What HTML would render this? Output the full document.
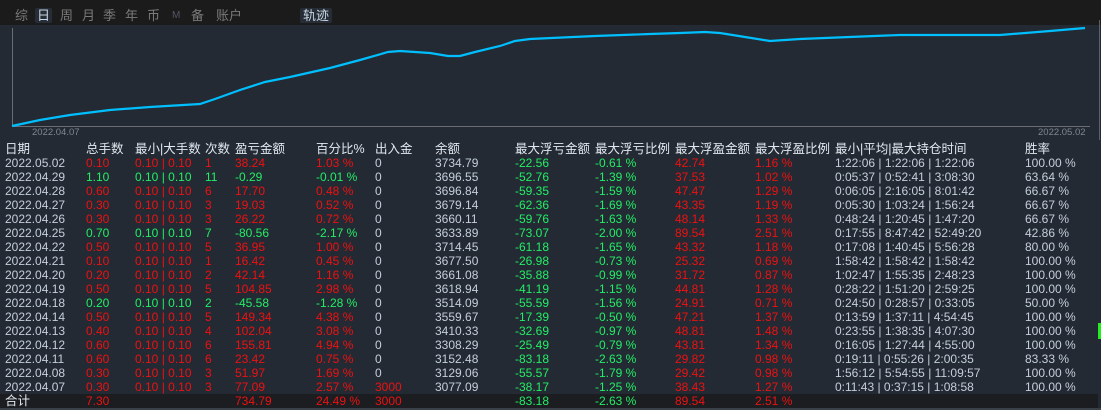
<!DOCTYPE html>
<html><head><meta charset="utf-8"><style>
body{margin:0;width:1101px;height:410px;background:#232a33;overflow:hidden;position:relative;font-family:"Liberation Sans","Noto Sans CJK SC",sans-serif;}
.top{position:absolute;left:0;top:0;width:1101px;height:25px;background:#1b1b1b;}
.t{position:absolute;top:8px;font-size:13px;line-height:15px;color:#7a7a7a;}
.sel{background:#262d36;color:#c8d6e6;border-radius:2px;padding:0 2px;}
.r{position:absolute;left:0;width:1095px;height:14px;font-size:12px;line-height:14px;color:#c5cfdc;}
.r span{position:absolute;white-space:pre;}
.h{font-size:12.5px;color:#e2e8f0;line-height:14px;}
.R{color:#ee1111}.G{color:#22ee66}
.a0{left:5px}.a1{left:86px}.a2{left:135px}.a3{left:205px}.a4{left:235px}.a5{left:316px}.a6{left:375px}.a7{left:435px}.a8{left:515px}.a9{left:595px}.a10{left:675px}.a11{left:755px}.a12{left:835px}.a13{left:1025px}
</style></head><body>
<div class="top"></div>
<span class="t" style="left:15px">综</span>
<span class="t sel" style="left:35px">日</span>
<span class="t" style="left:60px">周</span>
<span class="t" style="left:82px">月</span>
<span class="t" style="left:103px">季</span>
<span class="t" style="left:125px">年</span>
<span class="t" style="left:147px">币</span>
<span class="t" style="left:172px;font-size:10px;color:#556">M</span>
<span class="t" style="left:191px">备</span>
<span class="t" style="left:216px">账户</span>
<span class="t sel" style="left:300px;padding:0 3px">轨迹</span>
<svg style="position:absolute;left:0;top:0" width="1101" height="140">
<line x1="12.5" y1="28" x2="12.5" y2="127" stroke="#6a6e74" stroke-width="1"/>
<line x1="12" y1="126.5" x2="1090" y2="126.5" stroke="#6a6e74" stroke-width="1"/>
<polyline fill="none" stroke="#00bfff" stroke-width="2.2" points="12,126 40,120 70,115 110,110 150,107 200,104 215,99 240,90 265,82 290,77 330,68 360,60 388,52 400,51 430,53 448,56 460,56 475,52 500,46 515,41 530,39 595,36 650,34 680,33 705,32 720,33 745,37 770,41 800,39 900,35 1000,35 1050,31 1085,28"/>
<line x1="1099.5" y1="20" x2="1099.5" y2="410" stroke="#5a6068" stroke-width="1"/>
<text x="32" y="135" font-size="9.5" fill="#7f8792" font-family="Liberation Sans">2022.04.07</text>
<text x="1038" y="135" font-size="9.5" fill="#7f8792" font-family="Liberation Sans">2022.05.02</text>
</svg>
<div style="position:absolute;left:1098px;top:323px;width:3px;height:16px;background:#22ee22"></div>
<div class="r h" style="top:142px"><span class="a0">日期</span><span class="a1">总手数</span><span class="a2">最小|大手数</span><span class="a3">次数</span><span class="a4">盈亏金额</span><span class="a5">百分比%</span><span class="a6">出入金</span><span class="a7">余额</span><span class="a8">最大浮亏金额</span><span class="a9">最大浮亏比例</span><span class="a10">最大浮盈金额</span><span class="a11">最大浮盈比例</span><span class="a12">最小|平均|最大持仓时间</span><span class="a13">胜率</span></div>

<div class="r" style="top:156px"><span class="a0">2022.05.02</span><span class="a1 R">0.10</span><span class="a2 R">0.10 | 0.10</span><span class="a3 R">1</span><span class="a4 R">38.24</span><span class="a5 R">1.03 %</span><span class="a6">0</span><span class="a7">3734.79</span><span class="a8 G">-22.56</span><span class="a9 G">-0.61 %</span><span class="a10 R">42.74</span><span class="a11 R">1.16 %</span><span class="a12">1:22:06 | 1:22:06 | 1:22:06</span><span class="a13">100.00 %</span></div>
<div class="r" style="top:170px"><span class="a0">2022.04.29</span><span class="a1 G">1.10</span><span class="a2 G">0.10 | 0.10</span><span class="a3 G">11</span><span class="a4 G">-0.29</span><span class="a5 G">-0.01 %</span><span class="a6">0</span><span class="a7">3696.55</span><span class="a8 G">-52.76</span><span class="a9 G">-1.39 %</span><span class="a10 R">37.53</span><span class="a11 R">1.02 %</span><span class="a12">0:05:37 | 0:52:41 | 3:08:30</span><span class="a13">63.64 %</span></div>
<div class="r" style="top:184px"><span class="a0">2022.04.28</span><span class="a1 R">0.60</span><span class="a2 R">0.10 | 0.10</span><span class="a3 R">6</span><span class="a4 R">17.70</span><span class="a5 R">0.48 %</span><span class="a6">0</span><span class="a7">3696.84</span><span class="a8 G">-59.35</span><span class="a9 G">-1.59 %</span><span class="a10 R">47.47</span><span class="a11 R">1.29 %</span><span class="a12">0:06:05 | 2:16:05 | 8:01:42</span><span class="a13">66.67 %</span></div>
<div class="r" style="top:198px"><span class="a0">2022.04.27</span><span class="a1 R">0.30</span><span class="a2 R">0.10 | 0.10</span><span class="a3 R">3</span><span class="a4 R">19.03</span><span class="a5 R">0.52 %</span><span class="a6">0</span><span class="a7">3679.14</span><span class="a8 G">-62.36</span><span class="a9 G">-1.69 %</span><span class="a10 R">43.35</span><span class="a11 R">1.19 %</span><span class="a12">0:05:30 | 1:03:24 | 1:56:24</span><span class="a13">66.67 %</span></div>
<div class="r" style="top:212px"><span class="a0">2022.04.26</span><span class="a1 R">0.30</span><span class="a2 R">0.10 | 0.10</span><span class="a3 R">3</span><span class="a4 R">26.22</span><span class="a5 R">0.72 %</span><span class="a6">0</span><span class="a7">3660.11</span><span class="a8 G">-59.76</span><span class="a9 G">-1.63 %</span><span class="a10 R">48.14</span><span class="a11 R">1.33 %</span><span class="a12">0:48:24 | 1:20:45 | 1:47:20</span><span class="a13">66.67 %</span></div>
<div class="r" style="top:226px"><span class="a0">2022.04.25</span><span class="a1 G">0.70</span><span class="a2 G">0.10 | 0.10</span><span class="a3 G">7</span><span class="a4 G">-80.56</span><span class="a5 G">-2.17 %</span><span class="a6">0</span><span class="a7">3633.89</span><span class="a8 G">-73.07</span><span class="a9 G">-2.00 %</span><span class="a10 R">89.54</span><span class="a11 R">2.51 %</span><span class="a12">0:17:55 | 8:47:42 | 52:49:20</span><span class="a13">42.86 %</span></div>
<div class="r" style="top:240px"><span class="a0">2022.04.22</span><span class="a1 R">0.50</span><span class="a2 R">0.10 | 0.10</span><span class="a3 R">5</span><span class="a4 R">36.95</span><span class="a5 R">1.00 %</span><span class="a6">0</span><span class="a7">3714.45</span><span class="a8 G">-61.18</span><span class="a9 G">-1.65 %</span><span class="a10 R">43.32</span><span class="a11 R">1.18 %</span><span class="a12">0:17:08 | 1:40:45 | 5:56:28</span><span class="a13">80.00 %</span></div>
<div class="r" style="top:254px"><span class="a0">2022.04.21</span><span class="a1 R">0.10</span><span class="a2 R">0.10 | 0.10</span><span class="a3 R">1</span><span class="a4 R">16.42</span><span class="a5 R">0.45 %</span><span class="a6">0</span><span class="a7">3677.50</span><span class="a8 G">-26.98</span><span class="a9 G">-0.73 %</span><span class="a10 R">25.32</span><span class="a11 R">0.69 %</span><span class="a12">1:58:42 | 1:58:42 | 1:58:42</span><span class="a13">100.00 %</span></div>
<div class="r" style="top:268px"><span class="a0">2022.04.20</span><span class="a1 R">0.20</span><span class="a2 R">0.10 | 0.10</span><span class="a3 R">2</span><span class="a4 R">42.14</span><span class="a5 R">1.16 %</span><span class="a6">0</span><span class="a7">3661.08</span><span class="a8 G">-35.88</span><span class="a9 G">-0.99 %</span><span class="a10 R">31.72</span><span class="a11 R">0.87 %</span><span class="a12">1:02:47 | 1:55:35 | 2:48:23</span><span class="a13">100.00 %</span></div>
<div class="r" style="top:282px"><span class="a0">2022.04.19</span><span class="a1 R">0.50</span><span class="a2 R">0.10 | 0.10</span><span class="a3 R">5</span><span class="a4 R">104.85</span><span class="a5 R">2.98 %</span><span class="a6">0</span><span class="a7">3618.94</span><span class="a8 G">-41.19</span><span class="a9 G">-1.15 %</span><span class="a10 R">44.81</span><span class="a11 R">1.28 %</span><span class="a12">0:28:22 | 1:51:20 | 2:59:25</span><span class="a13">100.00 %</span></div>
<div class="r" style="top:296px"><span class="a0">2022.04.18</span><span class="a1 G">0.20</span><span class="a2 G">0.10 | 0.10</span><span class="a3 G">2</span><span class="a4 G">-45.58</span><span class="a5 G">-1.28 %</span><span class="a6">0</span><span class="a7">3514.09</span><span class="a8 G">-55.59</span><span class="a9 G">-1.56 %</span><span class="a10 R">24.91</span><span class="a11 R">0.71 %</span><span class="a12">0:24:50 | 0:28:57 | 0:33:05</span><span class="a13">50.00 %</span></div>
<div class="r" style="top:310px"><span class="a0">2022.04.14</span><span class="a1 R">0.50</span><span class="a2 R">0.10 | 0.10</span><span class="a3 R">5</span><span class="a4 R">149.34</span><span class="a5 R">4.38 %</span><span class="a6">0</span><span class="a7">3559.67</span><span class="a8 G">-17.39</span><span class="a9 G">-0.50 %</span><span class="a10 R">47.21</span><span class="a11 R">1.37 %</span><span class="a12">0:13:59 | 1:37:11 | 4:54:45</span><span class="a13">100.00 %</span></div>
<div class="r" style="top:324px"><span class="a0">2022.04.13</span><span class="a1 R">0.40</span><span class="a2 R">0.10 | 0.10</span><span class="a3 R">4</span><span class="a4 R">102.04</span><span class="a5 R">3.08 %</span><span class="a6">0</span><span class="a7">3410.33</span><span class="a8 G">-32.69</span><span class="a9 G">-0.97 %</span><span class="a10 R">48.81</span><span class="a11 R">1.48 %</span><span class="a12">0:23:55 | 1:38:35 | 4:07:30</span><span class="a13">100.00 %</span></div>
<div class="r" style="top:338px"><span class="a0">2022.04.12</span><span class="a1 R">0.60</span><span class="a2 R">0.10 | 0.10</span><span class="a3 R">6</span><span class="a4 R">155.81</span><span class="a5 R">4.94 %</span><span class="a6">0</span><span class="a7">3308.29</span><span class="a8 G">-25.49</span><span class="a9 G">-0.79 %</span><span class="a10 R">43.81</span><span class="a11 R">1.34 %</span><span class="a12">0:16:05 | 1:27:44 | 4:55:00</span><span class="a13">100.00 %</span></div>
<div class="r" style="top:352px"><span class="a0">2022.04.11</span><span class="a1 R">0.60</span><span class="a2 R">0.10 | 0.10</span><span class="a3 R">6</span><span class="a4 R">23.42</span><span class="a5 R">0.75 %</span><span class="a6">0</span><span class="a7">3152.48</span><span class="a8 G">-83.18</span><span class="a9 G">-2.63 %</span><span class="a10 R">29.82</span><span class="a11 R">0.98 %</span><span class="a12">0:19:11 | 0:55:26 | 2:00:35</span><span class="a13">83.33 %</span></div>
<div class="r" style="top:366px"><span class="a0">2022.04.08</span><span class="a1 R">0.30</span><span class="a2 R">0.10 | 0.10</span><span class="a3 R">3</span><span class="a4 R">51.97</span><span class="a5 R">1.69 %</span><span class="a6">0</span><span class="a7">3129.06</span><span class="a8 G">-55.57</span><span class="a9 G">-1.79 %</span><span class="a10 R">29.42</span><span class="a11 R">0.98 %</span><span class="a12">1:56:12 | 5:54:55 | 11:09:57</span><span class="a13">100.00 %</span></div>
<div class="r" style="top:380px"><span class="a0">2022.04.07</span><span class="a1 R">0.30</span><span class="a2 R">0.10 | 0.10</span><span class="a3 R">3</span><span class="a4 R">77.09</span><span class="a5 R">2.57 %</span><span class="a6 R">3000</span><span class="a7">3077.09</span><span class="a8 G">-38.17</span><span class="a9 G">-1.25 %</span><span class="a10 R">38.43</span><span class="a11 R">1.27 %</span><span class="a12">0:11:43 | 0:37:15 | 1:08:58</span><span class="a13">100.00 %</span></div>
<div style="position:absolute;left:0;top:394px;width:1098px;height:14px;background:#1b1d20"></div>
<div style="position:absolute;left:0;top:408px;width:1101px;height:2px;background:#3a4048"></div>
<div class="r" style="top:394px"><span class="a0" style="color:#e2e8f0;font-size:12.5px">合计</span><span class="a1 R">7.30</span><span class="a4 R">734.79</span><span class="a5 R">24.49 %</span><span class="a6 R">3000</span><span class="a8 G">-83.18</span><span class="a9 G">-2.63 %</span><span class="a10 R">89.54</span><span class="a11 R">2.51 %</span></div>
</body></html>
